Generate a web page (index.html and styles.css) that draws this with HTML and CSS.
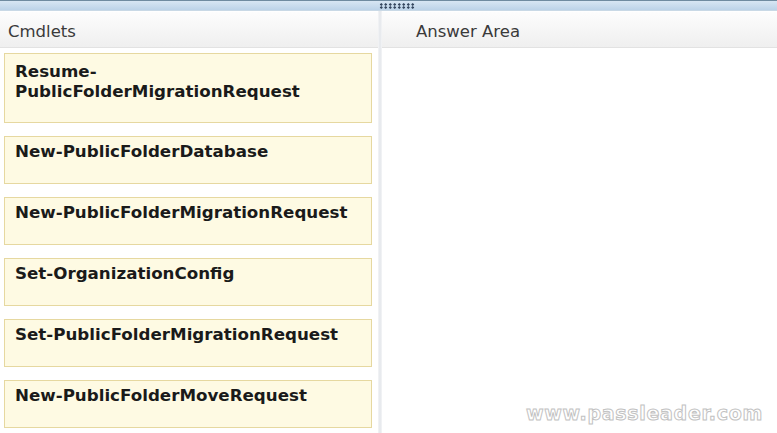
FILE: index.html
```html
<!DOCTYPE html>
<html>
<head>
<meta charset="utf-8">
<link rel="stylesheet" href="styles.css">
</head>
<body>
<div class="topbar"><div class="grip"></div></div>
<div class="panes">
  <div class="pane left">
    <div class="head">Cmdlets</div>
    <div class="list">
      <div class="card tall">Resume-<br>PublicFolderMigrationRequest</div>
      <div class="card">New-PublicFolderDatabase</div>
      <div class="card">New-PublicFolderMigrationRequest</div>
      <div class="card">Set-OrganizationConfig</div>
      <div class="card">Set-PublicFolderMigrationRequest</div>
      <div class="card">New-PublicFolderMoveRequest</div>
    </div>
  </div>
  <div class="divider"></div>
  <div class="pane right">
    <div class="head">Answer Area</div>
  </div>
</div>
<div class="watermark">www.passleader.com</div>
</body>
</html>
```
FILE: styles.css
```css
html, body { margin: 0; padding: 0; }
body {
  width: 777px; height: 433px; overflow: hidden; background: #fff;
  font-family: "DejaVu Sans", Verdana, sans-serif; position: relative;
}
.topbar {
  height: 9px;
  border-top: 1px solid #6f8ba0;
  background: linear-gradient(#d7e6f3, #bcd3e8);
  border-bottom: 1px solid #c9d9e6;
  display: flex; justify-content: center;
}
.grip {
  width: 36px; height: 6px; margin-top: 2px; margin-left: 16px;
  background-image: radial-gradient(circle, #34465e 1px, transparent 1.4px);
  background-size: 4.5px 3px;
}
.panes { display: flex; height: 422px; }
.pane.left { width: 378px; }
.divider { width: 4px; background: linear-gradient(90deg, #f4f5f7, #e4e7eb 50%, #f4f5f7); }
.pane.right { flex: 1; }
.head {
  height: 36px; margin-top: 1px; box-sizing: border-box;
  background: linear-gradient(#fdfdfd, #efefef);
  border-bottom: 1px solid #e2e2e2;
  font-size: 16.5px; color: #3a3a3a;
  display: flex; align-items: center; padding-left: 8px; padding-top: 4px;
}
.right .head { padding-left: 34px; }
.list { display: flex; flex-direction: column; gap: 13px; padding: 5px 6px 0 4px; }
.card {
  height: 48px; box-sizing: border-box;
  background: #fefae3;
  border: 1px solid #e6d8a0;
  font-weight: bold; font-size: 16.7px; color: #1a1a1a;
  padding: 5px 10px; line-height: 19px;
}
.card.tall { height: 70px; padding-top: 7px; line-height: 20px; }
.watermark {
  position: absolute; right: 14px; bottom: 9px;
  font-family: "DejaVu Sans", sans-serif; font-weight: bold; font-size: 19px;
  color: #fff; -webkit-text-stroke: 1px #c2c2c2; letter-spacing: 0.7px;
}
```
